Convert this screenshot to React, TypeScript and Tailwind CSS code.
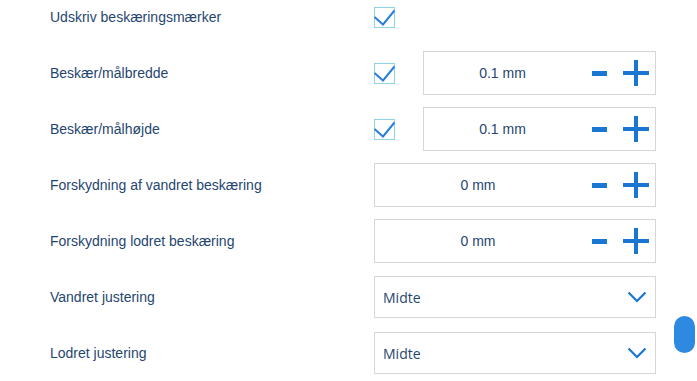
import React from 'react';

const labelFont = { fontFamily: '"Liberation Sans", Arial, sans-serif' };

const CheckBox = () => (
  <div className="relative w-[21px] h-[21px] border border-[#8ed4e6] bg-white flex-shrink-0">
    <svg className="absolute -left-px -top-px overflow-visible" width="21" height="21" viewBox="0 0 21 21">
      <path d="M0.5 10 L9 17.5 L20.5 3.5" fill="none" stroke="#2b7fd6" strokeWidth="2" />
    </svg>
  </div>
);

const Stepper = ({ value, className }: { value: string; className: string }) => (
  <div className={`h-[44px] border border-[#d6d6d6] bg-white flex items-center ${className}`}>
    <span className="flex-1 text-center text-[14px] text-[#1f4670]" style={labelFont}>{value}</span>
    <div className="w-[74px] flex items-center pl-[11px] gap-[16px]">
      <div className="w-[15px] h-[5px] bg-[#1976d2]" />
      <svg width="26" height="26" viewBox="0 0 26 26">
        <rect x="11" y="0" width="4" height="26" fill="#1976d2" />
        <rect x="0" y="11" width="26" height="4" fill="#1976d2" />
      </svg>
    </div>
  </div>
);

const Select = ({ value }: { value: string }) => (
  <div className="w-[282px] h-[42px] border border-[#d6d6d6] bg-white flex items-center justify-between pl-[8px] pr-[8px]">
    <span className="text-[14px] text-[#1f4670]" style={{ fontFamily: '"Open Sans", sans-serif' }}>{value}</span>
    <svg width="20" height="12" viewBox="0 0 20 12">
      <path d="M1.5 1.5 L10 10 L18.5 1.5" fill="none" stroke="#1976d2" strokeWidth="2.2" />
    </svg>
  </div>
);

const Label = ({ text }: { text: string }) => (
  <div className="w-[324px] text-[14px] text-[#1f4670]" style={labelFont}>{text}</div>
);

export default function App() {
  return (
    <div className="relative w-[697px] h-[381px] bg-white overflow-hidden">
      <div className="flex flex-col gap-3 pl-[50px]">
        <div className="h-[34px] flex items-center mb-[5px]">
          <Label text="Udskriv beskæringsmærker" />
          <CheckBox />
        </div>
        <div className="h-[44px] flex items-center">
          <Label text="Beskær/målbredde" />
          <CheckBox />
          <Stepper value="0.1 mm" className="ml-[28px] w-[233px]" />
        </div>
        <div className="h-[44px] flex items-center">
          <Label text="Beskær/målhøjde" />
          <CheckBox />
          <Stepper value="0.1 mm" className="ml-[28px] w-[233px]" />
        </div>
        <div className="h-[44px] flex items-center">
          <Label text="Forskydning af vandret beskæring" />
          <Stepper value="0 mm" className="w-[282px]" />
        </div>
        <div className="h-[44px] flex items-center">
          <Label text="Forskydning lodret beskæring" />
          <Stepper value="0 mm" className="w-[282px]" />
        </div>
        <div className="h-[44px] flex items-center">
          <Label text="Vandret justering" />
          <Select value="Midte" />
        </div>
        <div className="h-[44px] flex items-center">
          <Label text="Lodret justering" />
          <Select value="Midte" />
        </div>
      </div>
      <div className="absolute left-[674px] top-[316px] w-[21px] h-[37px] rounded-full bg-[#2e8ae0]" />
    </div>
  );
}
